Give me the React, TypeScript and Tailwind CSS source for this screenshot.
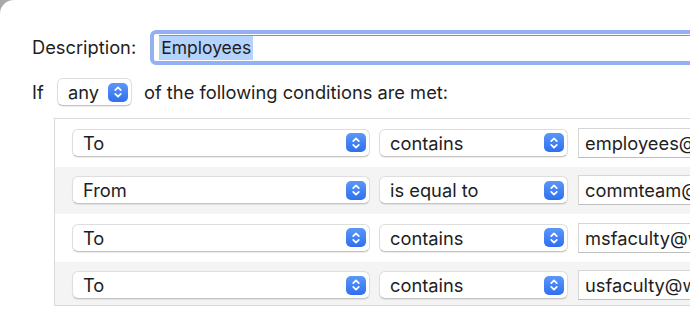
import React from 'react'

const rows = [
  { field: 'To', op: 'contains', value: 'employees@westridge.org', shade: false },
  { field: 'From', op: 'is equal to', value: 'commteam@westridge.org', shade: true },
  { field: 'To', op: 'contains', value: 'msfaculty@westridge.org', shade: false },
  { field: 'To', op: 'contains', value: 'usfaculty@westridge.org', shade: true },
]

function Stepper() {
  return (
    <span className="flex h-[19px] w-[20px] items-center justify-center rounded-[5px] bg-gradient-to-b from-[#5b97f8] to-[#2f6ff0]">
      <svg width="10" height="14" viewBox="0 0 10 14" fill="none">
        <path d="M2.2 5.2 L5 2.4 L7.8 5.2" stroke="white" strokeWidth="1.7" strokeLinecap="round" strokeLinejoin="round" />
        <path d="M2.2 8.8 L5 11.6 L7.8 8.8" stroke="white" strokeWidth="1.7" strokeLinecap="round" strokeLinejoin="round" />
      </svg>
    </span>
  )
}

function Popup({ label, width }: { label: string; width: string }) {
  return (
    <div
      className={`${width} flex h-[28px] shrink-0 items-center justify-between rounded-[6px] border border-[#dedede] border-b-[#c4c4c4] bg-white pl-[10px] pr-[3px] shadow-[0_1px_1px_rgba(0,0,0,0.08)]`}
    >
      <span>{label}</span>
      <Stepper />
    </div>
  )
}

function App() {
  return (
    <div
      className="h-[326px] w-[690px] overflow-hidden bg-[#a9a9a9] text-[18.3px] leading-none text-[#1e1e1e]"
      style={{ fontFamily: 'Inter, "Noto Sans", sans-serif' }}
    >
      <div className="h-full overflow-hidden rounded-tl-[14px] bg-white pl-[32px] pt-[30px]">
        <div className="flex items-center gap-[14px]">
          <span>Description:</span>
          <div className="flex h-[35px] w-[600px] shrink-0 items-center rounded-[6px] border-[4px] border-[#93b1f2] bg-white pl-[5px]">
            <div className="flex h-[25px] w-full items-center border-t border-[#6e93e6]">
              <span className="flex h-[24px] items-center bg-[#b3d3fd] px-[2px] text-[17.5px]">Employees</span>
            </div>
          </div>
        </div>

        <div className="mt-[13px] flex items-center">
          <span className="w-[25px]">If</span>
          <Popup label="any" width="w-[75px]" />
          <span className="ml-[12px]">of the following conditions are met:</span>
        </div>

        <div className="ml-[22px] mt-[12px] h-[188px] w-[700px] overflow-hidden border border-[#d9d9d9] bg-white">
          {rows.map((row, i) => (
            <div
              key={i}
              className={`flex h-[47.5px] items-center gap-[9px] pl-[17px] ${row.shade ? 'bg-[#f4f4f4]' : 'bg-white'}`}
            >
              <Popup label={row.field} width="w-[298px]" />
              <Popup label={row.op} width="w-[189px]" />
              <div className="ml-[1px] flex h-[30px] w-[300px] shrink-0 items-center overflow-hidden border border-[#d6d6d6] border-b-[#bdbdbd] bg-white pl-[6px] whitespace-nowrap">
                {row.value}
              </div>
            </div>
          ))}
        </div>
      </div>
    </div>
  )
}

export default App
